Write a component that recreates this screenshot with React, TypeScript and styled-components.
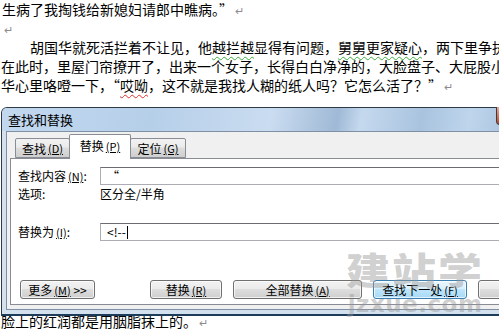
import React from "react";
import styled, { createGlobalStyle } from "styled-components";

const GlobalStyle = createGlobalStyle`
  html, body {
    margin: 0;
    padding: 0;
    background: #fff;
  }
  body {
    width: 499px;
    height: 329px;
    overflow: hidden;
  }
  * {
    box-sizing: border-box;
  }
`;

const Page = styled.div`
  position: relative;
  width: 499px;
  height: 329px;
  overflow: hidden;
  font-family: "Noto Sans CJK SC", sans-serif;
  display: flex;
  flex-direction: column;
`;

const Line = styled.div<{ $indent?: number }>`
  font-size: 14px;
  line-height: 19px;
  height: 19px;
  flex: none;
  color: #000;
  white-space: nowrap;
  padding-left: ${(p) => p.$indent ?? 1}px;
`;

const Mark = styled.span`
  font-size: 11px;
  color: #8c8c8c;
  margin-left: 2px;
`;

const Wavy = styled.span<{ $color: string }>`
  text-decoration: underline wavy ${(p) => p.$color};
  text-decoration-thickness: 1px;
  text-underline-offset: 3px;
`;

const Window = styled.div`
  position: relative;
  z-index: 1;
  flex: none;
  margin: 12px 0 0 1px;
  width: 600px;
  border: 1px solid #2f3a46;
  border-bottom: 2px solid #1d3c5a;
  border-radius: 6px 6px 0 0;
  background: #d3e1ef;
  display: flex;
  flex-direction: column;
`;

const TitleBar = styled.div`
  height: 23px;
  display: flex;
  align-items: center;
  padding-left: 6px;
  font-size: 13px;
  color: #000;
  background: linear-gradient(
    100deg,
    #c2d8ef 0%,
    #b6cfe9 25%,
    #cadcf0 45%,
    #9fb9d6 56%,
    #c5d9ee 60%,
    #a9c3df 70%,
    #bed5ec 78%,
    #a7c1dd 86%,
    #c2d7ed 100%
  );
  border-radius: 5px 5px 0 0;
`;

const CloseBox = styled.div`
  position: absolute;
  top: -1px;
  left: 494px;
  width: 44px;
  height: 18px;
  border: 1px solid #3c3c3c;
  border-top: 0;
  border-radius: 0 0 4px 4px;
  background: linear-gradient(#e9a99b, #c7452d);
`;

const Client = styled.div`
  margin: 0 4px 4px 4px;
  border: 1px solid #7f90a4;
  background: #f0f0f0;
  padding: 2px 3px 4px 3px;
  display: flex;
  flex-direction: column;
`;

const TabRow = styled.div`
  display: flex;
  align-items: flex-end;
  padding-left: 5px;
  height: 24px;
  position: relative;
  z-index: 1;
`;

const Tab = styled.div<{ $active?: boolean; $w: number }>`
  width: ${(p) => p.$w}px;
  height: ${(p) => (p.$active ? 25 : 20)}px;
  margin-bottom: ${(p) => (p.$active ? -1 : 0)}px;
  margin-right: -1px;
  display: flex;
  align-items: center;
  justify-content: center;
  font-size: 12px;
  color: #000;
  border: 1px solid #898c95;
  border-bottom: ${(p) => (p.$active ? "0" : "1px solid #898c95")};
  border-radius: 2px 2px 0 0;
  background: ${(p) =>
    p.$active ? "#ffffff" : "linear-gradient(#f2f2f2 0%, #ebebeb 45%, #dddddd 50%, #cfcfcf 100%)"};
  position: relative;
  z-index: ${(p) => (p.$active ? 2 : 1)};
  padding-bottom: ${(p) => (p.$active ? 3 : 0)}px;
`;

const Key = styled.span`
  font-size: 11px;
  margin-left: 2px;
  text-decoration: underline;
`;

const Panel = styled.div`
  border: 1px solid #898c95;
  background: #fff;
  height: 147px;
  padding: 8px 0 0 7px;
  display: flex;
  flex-direction: column;
`;

const FieldRow = styled.div<{ $gap?: number; $h: number }>`
  display: flex;
  align-items: center;
  height: ${(p) => p.$h}px;
  margin-top: ${(p) => p.$gap ?? 0}px;
  font-size: 12px;
  line-height: 16px;
  color: #000;
`;

const Label = styled.div`
  width: 82px;
  white-space: nowrap;
`;

const Input = styled.div`
  flex: 1;
  height: 18px;
  border: 1px solid #abadb3;
  border-top-color: #6b6d73;
  background: #fff;
  font-size: 12px;
  line-height: 16px;
  padding-left: 6px;
  display: flex;
  align-items: center;
`;

const Caret = styled.span`
  display: inline-block;
  width: 1px;
  height: 13px;
  background: #000;
  margin-left: 1px;
`;

const ButtonRow = styled.div`
  display: flex;
  margin-top: 39px;
  padding-left: 2px;
`;

const Button = styled.div<{ $w: number; $gap?: number; $focus?: boolean }>`
  width: ${(p) => p.$w}px;
  margin-left: ${(p) => p.$gap ?? 0}px;
  height: 19px;
  flex: none;
  display: flex;
  align-items: center;
  justify-content: center;
  font-size: 12px;
  line-height: 16px;
  color: #000;
  white-space: nowrap;
  border: 1px solid ${(p) => (p.$focus ? "#3c7fb1" : "#707070")};
  border-radius: 3px;
  background: ${(p) =>
    p.$focus
      ? "linear-gradient(#eaf6fd 0%, #d9f0fc 45%, #bee6fd 50%, #a7d9f5 100%)"
      : "linear-gradient(#f2f2f2 0%, #ebebeb 45%, #dddddd 50%, #cfcfcf 100%)"};
  box-shadow: inset 0 0 0 1px rgba(255, 255, 255, 0.7);
`;

const Watermark = styled.div`
  position: absolute;
  z-index: 3;
  left: 346px;
  top: 246px;
  display: flex;
  flex-direction: column;
  align-items: center;
  color: rgba(150, 150, 150, 0.45);
  font-weight: 900;
  pointer-events: none;
`;

const WmTitle = styled.div`
  font-family: "Noto Sans CJK SC", sans-serif;
  font-size: 44px;
  line-height: 46px;
  letter-spacing: 2px;
  transform: scaleY(0.85);
`;

const WmSite = styled.div`
  font-family: "DejaVu Sans", sans-serif;
  font-size: 23px;
  line-height: 24px;
  letter-spacing: 0.5px;
`;

const LastLine = styled(Line)`
  margin-top: -4px;
`;

export default function App() {
  return (
    <>
      <GlobalStyle />
      <Page>
        <Line $indent={2}>
          生病了我掏钱给新媳妇请郎中瞧病。”<Mark>↵</Mark>
        </Line>
        <Line $indent={2}>
          <Mark>↵</Mark>
        </Line>
        <Line $indent={30}>
          胡国华就死活拦着不让见，他<Wavy $color="#3cac3c">越拦越</Wavy>显得有问题，
          <Wavy $color="#3cac3c">舅舅更家疑心</Wavy>，两下里争执
        </Line>
        <Line $indent={1}>
          在此时，里屋门帘撩开了，出来一个女子，长得白白净净的，大脸盘子、大屁股小
        </Line>
        <Line $indent={1}>
          华心里咯噔一下，“<Wavy $color="#e03030">哎呦</Wavy>，这不就是我找人糊的纸人吗？它怎么活了？”
          <Mark>↵</Mark>
        </Line>

        <Window>
          <CloseBox />
          <TitleBar>查找和替换</TitleBar>
          <Client>
            <TabRow>
              <Tab $w={55}>
                查找<Key>(D)</Key>
              </Tab>
              <Tab $w={62} $active>
                替换<Key>(P)</Key>
              </Tab>
              <Tab $w={56}>
                定位<Key>(G)</Key>
              </Tab>
            </TabRow>
            <Panel>
              <FieldRow $h={18}>
                <Label>
                  查找内容<Key>(N)</Key>:
                </Label>
                <Input>“</Input>
              </FieldRow>
              <FieldRow $h={16} $gap={1}>
                <Label>选项:</Label>
                <div>区分全/半角</div>
              </FieldRow>
              <FieldRow $h={18} $gap={21}>
                <Label>
                  替换为<Key>(I)</Key>:
                </Label>
                <Input>
                  &lt;!--<Caret />
                </Input>
              </FieldRow>
              <ButtonRow>
                <Button $w={75}>
                  更多<Key>(M)</Key>&nbsp;&gt;&gt;
                </Button>
                <Button $w={72} $gap={55}>
                  替换<Key>(R)</Key>
                </Button>
                <Button $w={129} $gap={11}>
                  全部替换<Key>(A)</Key>
                </Button>
                <Button $w={94} $gap={11} $focus>
                  查找下一处<Key>(F)</Key>
                </Button>
                <Button $w={75} $gap={11}>
                  取消
                </Button>
              </ButtonRow>
            </Panel>
          </Client>
        </Window>
        <LastLine $indent={1}>
          脸上的红润都是用胭脂抹上的。<Mark>↵</Mark>
        </LastLine>

        <Watermark>
          <WmTitle>建站学</WmTitle>
          <WmSite>jzxue.com</WmSite>
        </Watermark>
      </Page>
    </>
  );
}
